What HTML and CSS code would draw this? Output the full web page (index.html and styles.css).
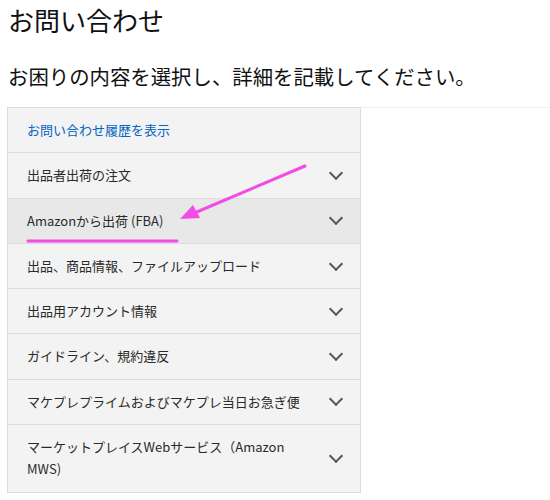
FILE: index.html
```html
<!DOCTYPE html>
<html lang="ja">
<head>
  <meta charset="UTF-8" />
  <meta name="viewport" content="width=device-width, initial-scale=1.0" />
  <title>お問い合わせ</title>
  <link rel="stylesheet" href="styles.css">
</head>
<body>
  <main class="page">
    <h1>お問い合わせ</h1>
    <p class="lead">お困りの内容を選択し、詳細を記載してください。</p>

    <div class="layout">
      <section class="menu">
        <a class="menu-row history" href="#">お問い合わせ履歴を表示</a>
        <div class="menu-row"><span>出品者出荷の注文</span><i class="chev"></i></div>
        <div class="menu-row active"><span>Amazonから出荷 (FBA)</span><i class="chev"></i></div>
        <div class="menu-row"><span>出品、商品情報、ファイルアップロード</span><i class="chev"></i></div>
        <div class="menu-row"><span>出品用アカウント情報</span><i class="chev"></i></div>
        <div class="menu-row"><span>ガイドライン、規約違反</span><i class="chev"></i></div>
        <div class="menu-row"><span>マケプレプライムおよびマケプレ当日お急ぎ便</span><i class="chev"></i></div>
        <div class="menu-row"><span>マーケットプレイスWebサービス（Amazon MWS)</span><i class="chev"></i></div>
      </section>
      <section class="side"></section>
    </div>
  </main>

  <!-- 注釈（矢印と下線） -->
  <svg class="marks" width="550" height="500" viewBox="0 0 550 500">
    <line x1="305" y1="166" x2="192" y2="214" stroke="#f24be6" stroke-width="3" stroke-linecap="round" />
    <polygon points="180,219 193,205 200,218" fill="#f24be6" />
    <line x1="28" y1="241" x2="177" y2="241" stroke="#f24be6" stroke-width="3" stroke-linecap="round" />
  </svg>
</body>
</html>
```

FILE: styles.css
```css
body {
  font-family: "Noto Sans CJK JP", "Noto Sans", sans-serif;
  margin: 0;
  padding: 0;
  background: #fff;
  color: #222;
}
.page {
  padding: 0 0 0 7px;
}
h1 {
  font-size: 26px;
  font-weight: 400;
  line-height: 36px;
  margin: 2px 0 0 1px;
  color: #111;
}
.lead {
  font-size: 20.4px;
  line-height: 30px;
  margin: 23px 0 16px 1px;
  color: #111;
}
.layout {
  display: flex;
}
.menu {
  width: 352px;
  border: 1px solid #dcdcdc;
  background: #f3f3f3;
}
.side {
  flex: 1;
  border-top: 1px solid #f0f0f0;
}
.menu-row {
  display: flex;
  align-items: center;
  justify-content: space-between;
  gap: 14px;
  padding: 11px 18px 11px 19px;
  font-size: 13px;
  line-height: 22.3px;
  border-top: 1px solid #dcdcdc;
  color: #2a2a2a;
}
.menu-row:first-child {
  border-top: 0;
}
.menu-row.active {
  background: #e8e8e8;
}
.history {
  color: #0066c0;
  text-decoration: none;
}
.chev {
  flex: none;
  width: 8px;
  height: 8px;
  margin: -5px 1px 0 0;
  border-right: 2px solid #555;
  border-bottom: 2px solid #555;
  transform: rotate(45deg);
}
.marks {
  position: absolute;
  top: 0;
  left: 0;
  pointer-events: none;
}
```
